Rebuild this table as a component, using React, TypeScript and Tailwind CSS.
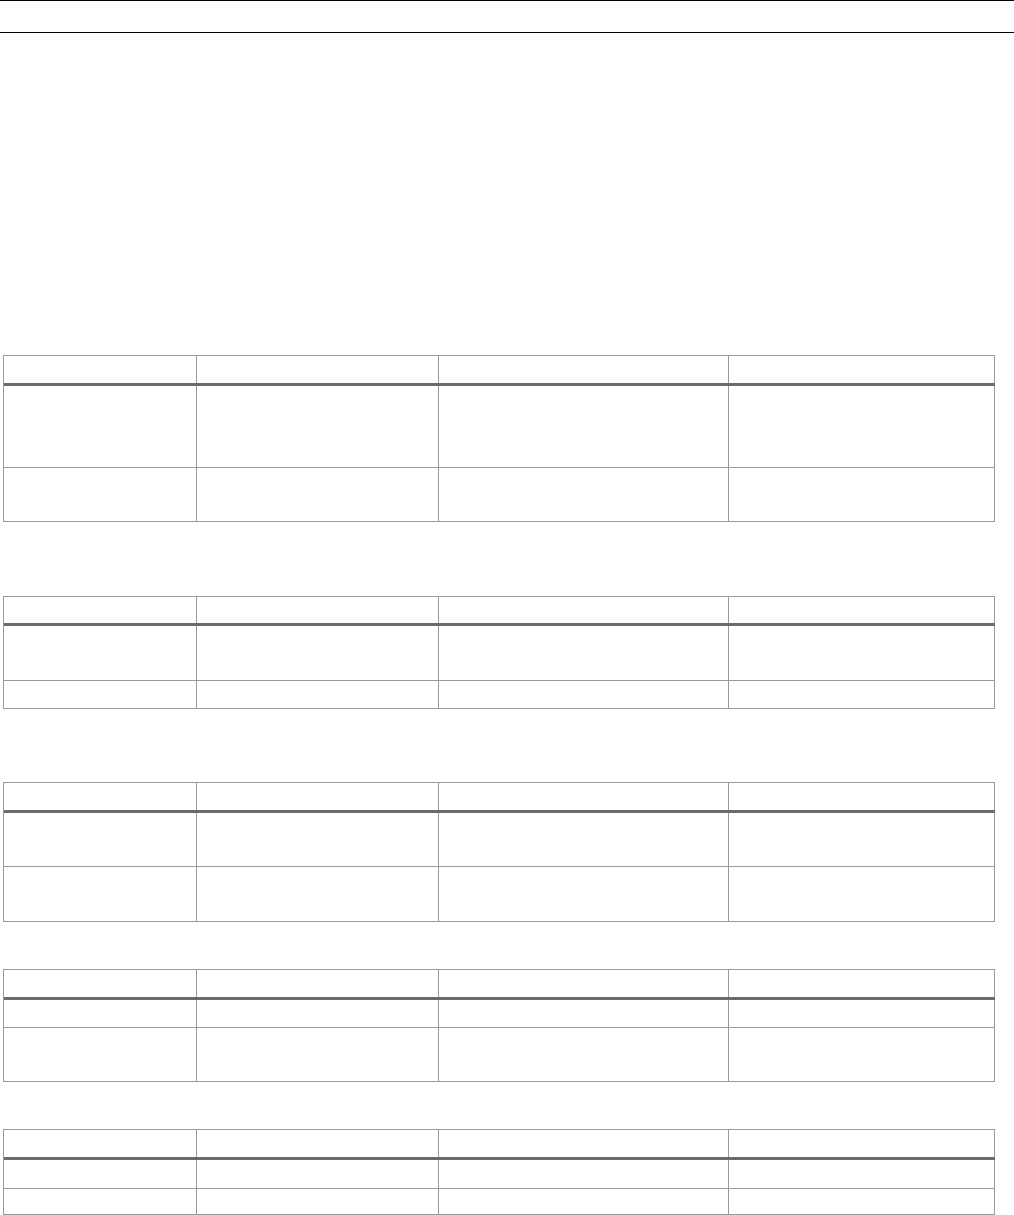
const cols = ["w-[193px]", "w-[242px]", "w-[290px]", "w-[266px]"];

type Grid = {
  gap: string;
  head: string;
  rows: string[];
};

const tables: Grid[] = [
  { gap: "mt-[322px]", head: "h-[30px]", rows: ["h-[82px]", "h-[54px]"] },
  { gap: "mt-[74px]", head: "h-[29px]", rows: ["h-[55px]", "h-[28px]"] },
  { gap: "mt-[73px]", head: "h-[30px]", rows: ["h-[54px]", "h-[55px]"] },
  { gap: "mt-[47px]", head: "h-[30px]", rows: ["h-[28px]", "h-[54px]"] },
  { gap: "mt-[47px]", head: "h-[30px]", rows: ["h-[29px]", "h-[26px]"] },
];

const Row = ({ h, head }: { h: string; head?: boolean }) => (
  <div
    className={`flex ${h} ${
      head ? "border-b-[3px] border-[#6b6b6b]" : "border-b border-[#999999]"
    }`}
  >
    {cols.map((w, i) => (
      <div key={i} className={`${w} h-full border-r border-[#999999]`}></div>
    ))}
  </div>
);

const App = () => {
  return (
    <div className="w-[1014px] min-h-[1215px] bg-white font-['Liberation_Sans',Arial,sans-serif] text-black">
      <div className="h-[33px] w-full border-y border-black"></div>

      {tables.map((t, i) => (
        <div
          key={i}
          className={`${t.gap} ml-[3px] w-[992px] border-l border-t border-[#999999] flex flex-col`}
        >
          <Row h={t.head} head />
          {t.rows.map((r, j) => (
            <Row key={j} h={r} />
          ))}
        </div>
      ))}
    </div>
  );
};

export default App;
